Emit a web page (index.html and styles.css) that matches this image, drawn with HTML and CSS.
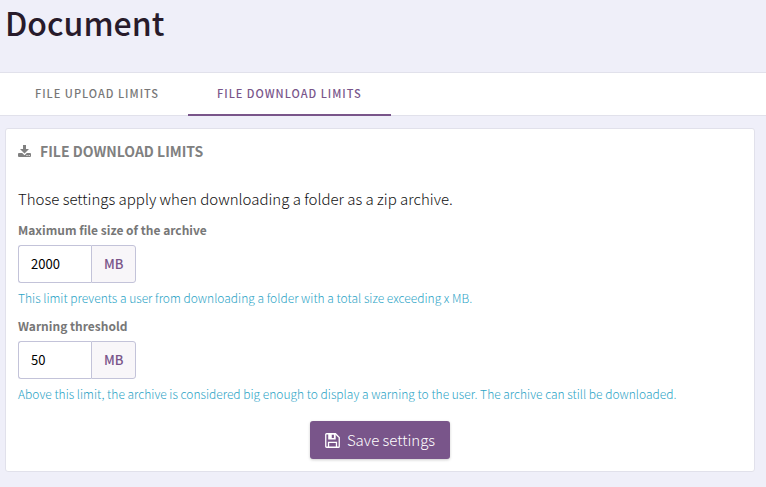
FILE: index.html
```html
<!DOCTYPE html>
<html lang="en">
<head>
    <meta charset="UTF-8">
    <meta name="viewport" content="width=device-width, initial-scale=1.0">
    <title>Document</title>
    <link rel="stylesheet" href="styles.css">
</head>
<body>
    <h1>Document</h1>
    <nav class="tabs">
        <a class="tab" href="#upload">File upload limits</a>
        <a class="tab active" href="#download" aria-current="page">File download limits</a>
    </nav>
    <main>
        <form class="pane">
            <h2>
                <svg class="pane-icon" viewBox="0 0 13 12" aria-hidden="true">
                    <path fill="currentColor" d="M5 0h3v4h3L6.500 8.500 2 4h3z"/>
                    <path fill="currentColor" fill-rule="evenodd" d="M0 9q0-1 1-1h3.200l2.300 2.200L8.800 8H12q1 0 1 1v2q0 1-1 1H1q-1 0-1-1zM8.500 10v1h1v-1zM10.700 10v1h1v-1z"/>
                </svg>
                File download limits
            </h2>
            <p class="intro">Those settings apply when downloading a folder as a zip archive.</p>
            <div class="form-group">
                <label for="maxSize">Maximum file size of the archive</label>
                <div class="input-append">
                    <input type="text" id="maxSize" inputmode="numeric" value="2000">
                    <span class="unit">MB</span>
                </div>
                <p class="help">This limit prevents a user from downloading a folder with a total size exceeding x MB.</p>
            </div>
            <div class="form-group">
                <label for="threshold">Warning threshold</label>
                <div class="input-append">
                    <input type="text" id="threshold" inputmode="numeric" value="50">
                    <span class="unit">MB</span>
                </div>
                <p class="help">Above this limit, the archive is considered big enough to display a warning to the user. The archive can still be downloaded.</p>
            </div>
            <button type="submit">
                <svg class="save-icon" viewBox="0 0 14 14" aria-hidden="true">
                    <path fill="none" stroke="currentColor" stroke-width="1.200" d="M1.500.7h8.300l3.500 3.500v8.300q0 .8-.8.8h-11q-.8 0-.8-.8v-11q0-.8.800-.8zM3.300 13V8.700h7.400V13"/>
                    <path fill="currentColor" fill-rule="evenodd" d="M3 .7h7V6H3zM6.300 1.500v3.200h2V1.500z"/>
                </svg>
                Save settings
            </button>
        </form>
    </main>
</body>
</html>
```
FILE: styles.css
```css
* {
    box-sizing: border-box;
}

body {
    margin: 0;
    background-color: #efeff9;
    color: #111;
    font-family: "Noto Sans CJK SC", sans-serif;
    font-size: 15px;
    font-weight: 300;
    line-height: 20px;
}

h1 {
    margin: 0;
    padding: 0 5px 28px;
    color: #281b2b;
    font-size: 32px;
    font-weight: 500;
    line-height: 44px;
}

.tabs {
    display: flex;
    padding: 0 6px;
    background-color: #fff;
    border-top: 1px solid #e1e1eb;
    box-shadow: inset 0 -1px #e1e1eb;
}

.tab {
    padding: 0 29px;
    border-bottom: 2px solid transparent;
    color: #777;
    font-size: 11px;
    font-weight: 500;
    letter-spacing: 1px;
    line-height: 41px;
    text-decoration: none;
    text-transform: uppercase;
}

.tab.active {
    border-color: #79558a;
    color: #79558a;
}

main {
    padding: 12px 11px 15px 5px;
}

.pane {
    padding: 12px;
    background-color: #fff;
    border: 1px solid #e1e1eb;
    border-radius: 3px;
}

h2 {
    display: flex;
    align-items: center;
    gap: 9px;
    margin: 0 0 28px;
    color: #808080;
    font-size: 14px;
    font-weight: 700;
    line-height: 20px;
    text-transform: uppercase;
}

.pane-icon {
    width: 13px;
    height: 12px;
}

.intro {
    margin: 0 0 11px;
}

.form-group {
    margin-bottom: 8px;
}

label {
    display: block;
    margin-bottom: 5px;
    color: #777;
    font-size: 12px;
    font-weight: 700;
}

.input-append {
    display: flex;
    height: 38px;
    font-size: 13px;
    font-weight: 400;
}

input {
    width: 73px;
    padding: 0 12px;
    border: 1px solid #c3c3d9;
    border-right: 0;
    border-radius: 3px 0 0 3px;
    background-color: #fff;
    color: #000;
    font: inherit;
}

.unit {
    padding: 0 12px;
    border: 1px solid #c3c3d9;
    border-radius: 0 3px 3px 0;
    background-color: #f8f6f9;
    color: #79558a;
    font-weight: 500;
    line-height: 36px;
}

.help {
    margin: 5px 0 0;
    color: #2ca4c6;
    font-size: 12px;
}

button {
    display: flex;
    align-items: center;
    gap: 7px;
    height: 38px;
    margin: 17px auto 0;
    padding: 0 15px;
    border: 0;
    border-radius: 3px;
    background-color: #79558a;
    box-shadow: 0 1px 3px rgba(0, 0, 0, 0.2);
    color: #fff;
    font: inherit;
    cursor: pointer;
}

.save-icon {
    width: 15px;
    height: 15px;
}
```
